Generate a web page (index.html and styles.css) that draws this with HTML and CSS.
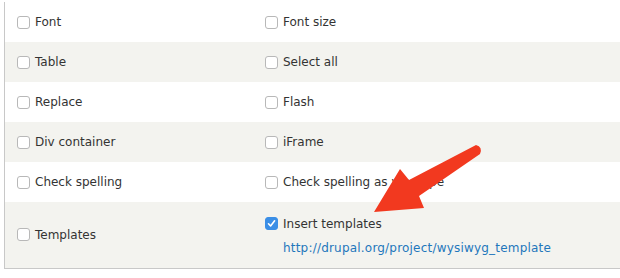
FILE: index.html
```html
<!DOCTYPE html>
<html lang="en">
<head>
    <meta charset="UTF-8">
    <title>Buttons and plugins</title>
    <link rel="stylesheet" href="styles.css">
</head>
<body>

    <table class="plugins">
        <tr>
            <td><label><span class="box"></span>Font</label></td>
            <td><label><span class="box"></span>Font size</label></td>
        </tr>
        <tr class="even">
            <td><label><span class="box"></span>Table</label></td>
            <td><label><span class="box"></span>Select all</label></td>
        </tr>
        <tr>
            <td><label><span class="box"></span>Replace</label></td>
            <td><label><span class="box"></span>Flash</label></td>
        </tr>
        <tr class="even">
            <td><label><span class="box"></span>Div container</label></td>
            <td><label><span class="box"></span>iFrame</label></td>
        </tr>
        <tr>
            <td><label><span class="box"></span>Check spelling</label></td>
            <td><label><span class="box"></span>Check spelling as you type</label></td>
        </tr>
        <tr class="even tall">
            <td><label><span class="box"></span>Templates</label></td>
            <td class="with-link">
                <label><span class="box checked">
                    <svg width="9" height="9" viewBox="0 0 9 9"><path d="M1.5 4.8 L3.6 7 L7.6 1.8" fill="none" stroke="#fff" stroke-width="1.6" stroke-linecap="round" stroke-linejoin="round"/></svg>
                </span>Insert templates</label>
                <a class="plugin-link" href="#">http://drupal.org/project/wysiwyg_template</a>
            </td>
        </tr>
    </table>

    <!-- Annotation arrow -->
    <svg class="arrow" width="620" height="278" viewBox="0 0 620 278">
        <path d="M476 145 Q483 147 480 154 L419 196 L424 208 L374 212 L400 169 L409 180 Z" fill="#f2391f"/>
    </svg>

</body>
</html>
```

FILE: styles.css
```css
body {
    margin: 0;
    padding: 0;
    background-color: #fff;
    font-family: "DejaVu Sans", Verdana, sans-serif;
    font-size: 12px;
    color: #333;
    position: relative;
    height: 278px;
    overflow: hidden;
}
.plugins {
    border-collapse: collapse;
    margin: 2px 0 0 4px;
    width: 640px;
    border-left: 1px solid #c8c8c8;
    border-bottom: 1px solid #c8c8c8;
}
.plugins tr {
    height: 40px;
    background-color: #fff;
}
.plugins tr.even {
    background-color: #f3f3ef;
}
.plugins tr.tall {
    height: 66px;
}
.plugins td {
    padding: 0 0 0 12px;
    vertical-align: middle;
}
.plugins td:first-child {
    width: 236px;
}
.plugins td.with-link {
    padding-top: 2px;
}
label {
    display: flex;
    align-items: center;
    gap: 5px;
}
.box {
    display: inline-flex;
    align-items: center;
    justify-content: center;
    box-sizing: border-box;
    width: 13px;
    height: 13px;
    border: 1px solid #b8b8b8;
    border-radius: 3px;
    background-color: #fff;
}
.box.checked {
    background-color: #3a8ee6;
    border-color: #3a8ee6;
}
.plugin-link {
    display: block;
    margin: 10px 0 0 18px;
    color: #1f77bc;
    letter-spacing: 0.2px;
    text-decoration: none;
}
.arrow {
    position: absolute;
    left: 0;
    top: 0;
    pointer-events: none;
}
```
